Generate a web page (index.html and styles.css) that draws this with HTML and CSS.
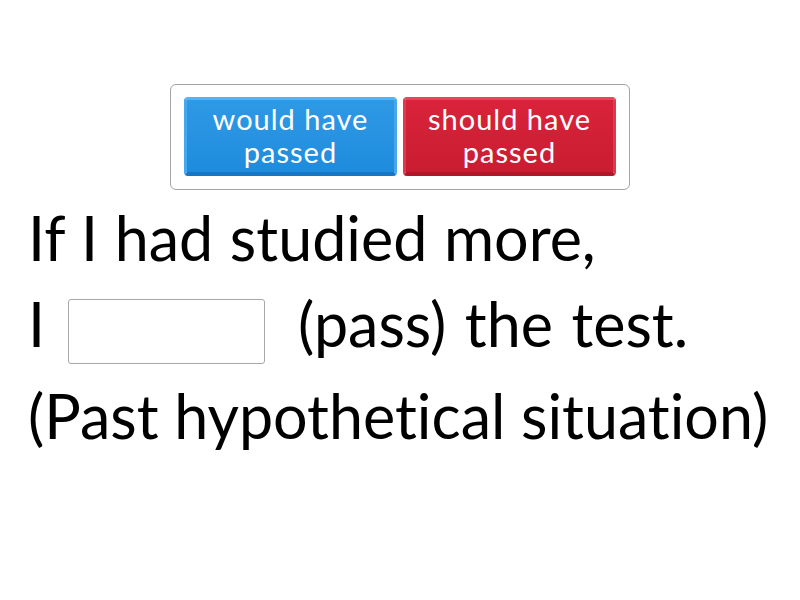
FILE: index.html
```html
<!DOCTYPE html>
<html>
<head>
<meta charset="utf-8">
<link rel="stylesheet" href="styles.css">
</head>
<body>
<div class="page">
  <div class="bank">
    <div class="tile tile-blue">would have<br>passed</div>
    <div class="tile tile-red">should have<br>passed</div>
  </div>
  <div class="question">
    <div class="line line1">If I had studied more,</div>
    <div class="line line2">I<span class="blank"></span>(pass) the test.</div>
    <div class="line line3">(Past hypothetical situation)</div>
  </div>
</div>
</body>
</html>
```
FILE: styles.css
```css
html, body {
  margin: 0;
  padding: 0;
  background: #ffffff;
}
.page {
  width: 800px;
  height: 600px;
  box-sizing: border-box;
  padding-top: 84px;
  font-family: Lato, "Open Sans", sans-serif;
  font-variant-ligatures: none;
  font-feature-settings: "liga" 0, "clig" 0;
  color: #000;
  overflow: hidden;
}
.bank {
  margin-left: 170px;
  width: 432px;
  height: 79px;
  padding: 12px 13px 13px 13px;
  border: 1px solid #a3a3a3;
  border-radius: 6px;
  display: flex;
  gap: 6px;
}
.tile {
  flex: 1;
  border-radius: 4px;
  color: #fff;
  font-size: 29px;
  line-height: 33px;
  letter-spacing: 1px;
  text-align: center;
  display: flex;
  align-items: center;
  justify-content: center;
  box-sizing: border-box;
  padding-bottom: 2px;
}
.tile-blue {
  background: linear-gradient(#2e9ae6, #1f8bdc);
  border-top: 3px solid #56b2f0;
  border-left: 3px solid #45a8ee;
  border-right: 3px solid #45a8ee;
  border-bottom: 4px solid #1877c4;
}
.tile-red {
  background: linear-gradient(#d9233b, #c91d31);
  border-top: 3px solid #e4465a;
  border-left: 3px solid #de3a4f;
  border-right: 3px solid #de3a4f;
  border-bottom: 4px solid #b0182a;
}
.question {
  margin-top: 5px;
  padding-left: 28px;
  font-size: 61px;
}
.line {
  height: 86px;
  line-height: 86px;
  white-space: nowrap;
}
.line1 {
  word-spacing: 1px;
}
.line2 {
  word-spacing: 3px;
}
.line3 {
  padding-top: 6px;
}
.blank {
  display: inline-block;
  width: 195px;
  height: 63px;
  border: 1px solid #a8a8a8;
  border-radius: 3px;
  vertical-align: middle;
  margin: 0 33px 0 23px;
}
```
